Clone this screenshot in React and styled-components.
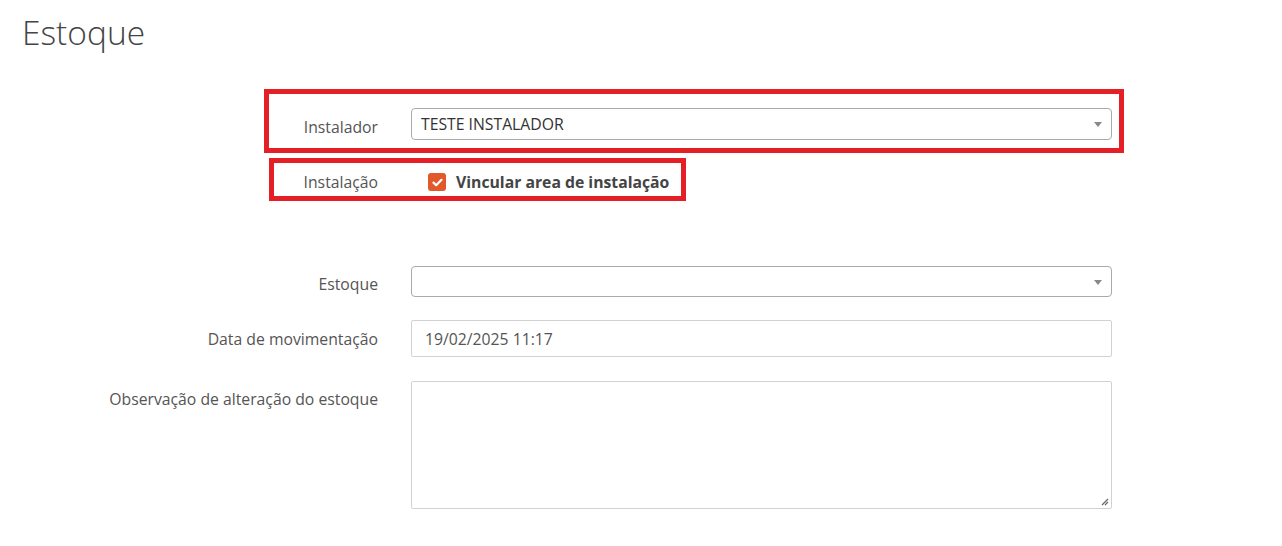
import React from "react";
import styled, { createGlobalStyle } from "styled-components";

const Global = createGlobalStyle`
  html, body { margin: 0; padding: 0; background: #fff; }
  body { font-family: "Open Sans", "Liberation Sans", sans-serif; color: #555; }
  * { box-sizing: border-box; }
`;

const Page = styled.div`
  width: 1282px;
  height: 546px;
  overflow: hidden;
  background: #fff;
`;

const Title = styled.h1`
  margin: 0;
  padding: 14px 0 0 22px;
  font-family: "Open Sans", "Liberation Sans", sans-serif;
  font-weight: 300;
  font-size: 33.5px;
  line-height: 37px;
  color: #444;
`;

const Form = styled.form`
  display: flex;
  flex-direction: column;
  margin: 0 0 0 96px;
  padding-top: ${(p) => p.$top}px;
  width: 1016px;
`;

const Row = styled.div`
  position: relative;
  display: grid;
  grid-template-columns: 282px 701px;
  column-gap: 33px;
  margin-top: ${(p) => p.$gap || 0}px;
`;

const Label = styled.label`
  text-align: right;
  font-size: 15.75px;
  line-height: 20px;
  color: #555;
  padding-top: ${(p) => p.$pt || 0}px;
`;

const Highlight = styled.div`
  position: absolute;
  left: ${(p) => p.$left}px;
  top: ${(p) => p.$top}px;
  width: ${(p) => p.$w}px;
  height: ${(p) => p.$h}px;
  border: 5px solid #e41f26;
  pointer-events: none;
`;

const Select = styled.div`
  position: relative;
  height: ${(p) => p.$h}px;
  border: 1px solid #aaa;
  border-radius: 4px;
  background: #fff;
  display: flex;
  align-items: center;
  padding: 0 24px 0 9px;
  font-size: 15.75px;
  color: #333;
`;

const Arrow = styled.span`
  position: absolute;
  right: 9px;
  top: 50%;
  margin-top: -2px;
  width: 0;
  height: 0;
  border-left: 4px solid transparent;
  border-right: 4px solid transparent;
  border-top: 5px solid #888;
`;

const Input = styled.div`
  height: 37px;
  border: 1px solid #d2d2d2;
  border-radius: 2px;
  display: flex;
  align-items: center;
  padding: 0 13px;
  font-size: 15.75px;
  color: #555;
`;

const TextArea = styled.div`
  position: relative;
  height: 128px;
  border: 1px solid #d2d2d2;
  border-radius: 2px;
`;

const Grip = styled.svg`
  position: absolute;
  right: 2px;
  bottom: 2px;
`;

const CheckWrap = styled.div`
  display: flex;
  align-items: center;
  gap: 10px;
  padding-left: 17px;
  height: 20px;
`;

const Box = styled.span`
  width: 18px;
  height: 18px;
  border-radius: 3px;
  background: #e2582a;
  display: flex;
  align-items: center;
  justify-content: center;
`;

const CheckText = styled.span`
  font-size: 15.75px;
  font-weight: 700;
  color: #444;
  line-height: 20px;
`;

export default function App() {
  return (
    <Page>
      <Global />
      <Title>Estoque</Title>
      <Form $top={57}>
        <Row>
          <Highlight $left={168} $top={-19} $w={860} $h={64} />
          <Label $pt={9}>Instalador</Label>
          <Select $h={32}>
            TESTE INSTALADOR
            <Arrow />
          </Select>
        </Row>
        <Row $gap={32}>
          <Highlight $left={173} $top={-14} $w={417} $h={43} />
          <Label>Instalação</Label>
          <CheckWrap>
            <Box>
              <svg width="11" height="9" viewBox="0 0 11 9">
                <path d="M1.5 4.6 L4.2 7.2 L9.5 1.8" fill="none" stroke="#fff" strokeWidth="2.2" strokeLinecap="round" strokeLinejoin="round" />
              </svg>
            </Box>
            <CheckText>Vincular area de instalação</CheckText>
          </CheckWrap>
        </Row>
        <Row $gap={74}>
          <Label $pt={8}>Estoque</Label>
          <Select $h={31}>
            <Arrow />
          </Select>
        </Row>
        <Row $gap={23}>
          <Label $pt={9}>Data de movimentação</Label>
          <Input>19/02/2025 11:17</Input>
        </Row>
        <Row $gap={24}>
          <Label $pt={8}>Observação de alteração do estoque</Label>
          <TextArea>
            <Grip width="9" height="9" viewBox="0 0 9 9">
              <path d="M8 2 L2 8 M8 5 L5 8" stroke="#666" strokeWidth="1.2" />
            </Grip>
          </TextArea>
        </Row>
      </Form>
    </Page>
  );
}
